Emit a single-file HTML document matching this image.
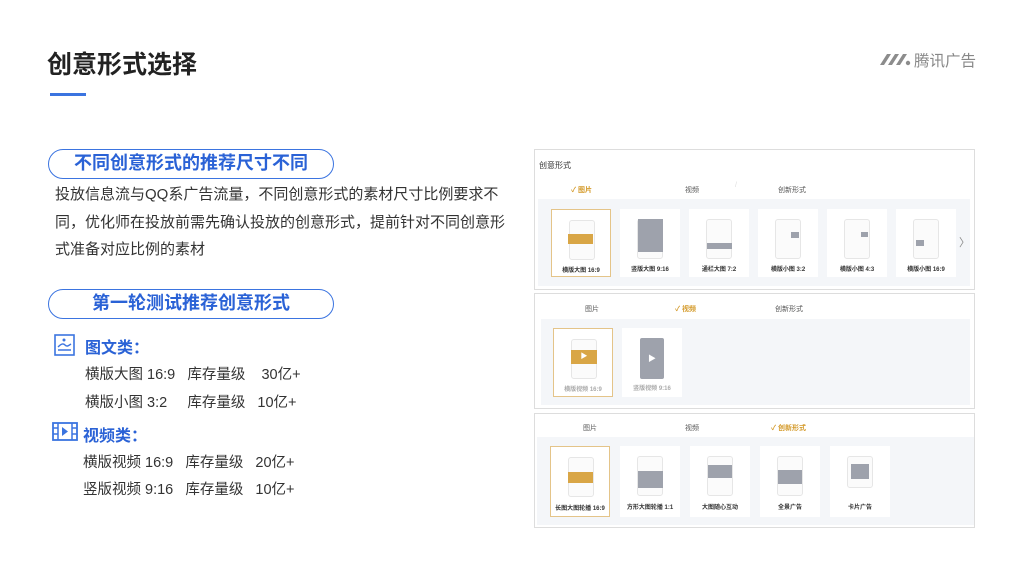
<!DOCTYPE html>
<html><head><meta charset="utf-8"><style>
*{margin:0;padding:0;box-sizing:border-box}
body{width:1024px;height:576px;background:#fff;position:relative;overflow:hidden;font-family:"Liberation Sans","Noto Sans CJK SC",sans-serif;color:#333}
.a{position:absolute;white-space:nowrap}
.pill{position:absolute;left:48px;width:286px;height:30px;border:1.5px solid #3b74e0;border-radius:15px;color:#2a62d6;font-weight:bold;font-size:18px;text-align:center;line-height:27px}
.p{font-size:15px;letter-spacing:0px;line-height:27.5px;color:#333}
.item{font-size:14.5px;color:#333}
.h{font-size:16px;font-weight:bold;color:#2a62d6}
.panel{position:absolute;left:534px;width:441px;border:1.5px solid #ddd;background:#fff}
.gray{position:absolute;background:#f4f6f9}
.card{position:absolute;background:#fff;width:60px;font-size:6px;text-align:center;color:#333;font-weight:bold}
.card.sel{border:1.5px solid #e4c489}
.ph{position:absolute;left:17px;width:26px;height:40px;border:1px solid #e6e6e6;border-radius:3px;background:#fbfbfb}
.tab{position:absolute;font-size:7px;color:#555}
.tab.on{color:#d49a2a;font-weight:bold}
.lbl{position:absolute;left:0;right:0}
</style></head><body>
<div class="a" style="left:47px;top:45px;font-size:25px;font-weight:bold;color:#222">创意形式选择</div>
<div class="a" style="left:50px;top:93px;width:36px;height:3px;background:#3b74e0"></div>
<svg class="a" style="left:878px;top:51px" width="34" height="16" viewBox="0 0 34 16"><g fill="#8c8c8c"><path d="M2 14l7-11h4l-7 11z"/><path d="M10 14l7-11h4l-7 11z"/><path d="M18 14l7-11h4l-7 11z"/><circle cx="30" cy="12" r="2.2"/></g></svg>
<div class="a" style="left:914px;top:49px;font-size:15.5px;color:#888">腾讯广告</div>

<div class="pill" style="top:149px">不同创意形式的推荐尺寸不同</div>
<div class="a p" style="left:55px;top:181px">投放信息流与QQ系广告流量，不同创意形式的素材尺寸比例要求不<br>同，优化师在投放前需先确认投放的创意形式，提前针对不同创意形<br>式准备对应比例的素材</div>
<div class="pill" style="top:289px">第一轮测试推荐创意形式</div>

<svg class="a" style="left:54px;top:334px" width="21" height="22" viewBox="0 0 21 22"><rect x="1" y="1" width="19" height="20" fill="none" stroke="#3b74e0" stroke-width="1.6"/><path d="M4 16h13M4 13c3-3 5-4 7-2s3 1 6-1" fill="none" stroke="#3b74e0" stroke-width="1.4"/><circle cx="10" cy="6" r="1.5" fill="#3b74e0"/></svg>
<div class="a h" style="left:85px;top:334px">图文类：</div>
<div class="a item" style="left:85px;top:363px">横版大图 16:9&nbsp;&nbsp; 库存量级&nbsp;&nbsp;&nbsp; 30亿+</div>
<div class="a item" style="left:85px;top:391px">横版小图 3:2&nbsp;&nbsp;&nbsp;&nbsp; 库存量级&nbsp;&nbsp;&nbsp;10亿+</div>
<svg class="a" style="left:52px;top:422px" width="26" height="19" viewBox="0 0 26 19"><rect x="1" y="1" width="24" height="17" fill="none" stroke="#3b74e0" stroke-width="1.8"/><path d="M6 1v17M20 1v17M1 6h5M1 12h5M20 6h5M20 12h5" stroke="#3b74e0" stroke-width="1.5"/><path d="M10 5l6 4.5-6 4.5z" fill="#3b74e0"/></svg>
<div class="a h" style="left:83px;top:422px">视频类：</div>
<div class="a item" style="left:83px;top:451px">横版视频 16:9&nbsp;&nbsp; 库存量级&nbsp;&nbsp;&nbsp;20亿+</div>
<div class="a item" style="left:83px;top:478px">竖版视频 9:16&nbsp;&nbsp; 库存量级&nbsp;&nbsp;&nbsp;10亿+</div>

<!-- panel 1 -->
<div class="panel" style="top:149px;height:141px">
 <div class="a" style="left:4px;top:10px;font-size:8px;color:#333">创意形式</div>
 <div class="tab on" style="left:36px;top:35px">✓ 图片</div>
 <div class="tab" style="left:150px;top:35px">视频</div>
 <div class="tab" style="left:200px;top:32px;color:#ddd">/</div>
 <div class="tab" style="left:243px;top:35px">创新形式</div>
 <div class="gray" style="left:3px;top:49px;width:432px;height:87px"></div>
</div>
<div class="card sel" style="left:551px;top:209px;height:68px"><div class="ph" style="top:10px"></div><div class="a" style="left:16px;top:24px;width:25px;height:10px;background:#d9a646"></div><div class="lbl" style="top:55px">横版大图 16:9</div></div>
<div class="card" style="left:620px;top:209px;height:68px"><div class="ph" style="top:10px"></div><div class="a" style="left:18px;top:10px;width:25px;height:33px;background:#9ea2ac"></div><div class="lbl" style="top:55px">竖版大图 9:16</div></div>
<div class="card" style="left:689px;top:209px;height:68px"><div class="ph" style="top:10px"></div><div class="a" style="left:18px;top:34px;width:25px;height:6px;background:#9ea2ac"></div><div class="lbl" style="top:55px">通栏大图 7:2</div></div>
<div class="card" style="left:758px;top:209px;height:68px"><div class="ph" style="top:10px"></div><div class="a" style="left:33px;top:23px;width:8px;height:6px;background:#9ea2ac"></div><div class="lbl" style="top:55px">横版小图 3:2</div></div>
<div class="card" style="left:827px;top:209px;height:68px"><div class="ph" style="top:10px"></div><div class="a" style="left:34px;top:23px;width:7px;height:5px;background:#9ea2ac"></div><div class="lbl" style="top:55px">横版小图 4:3</div></div>
<div class="card" style="left:896px;top:209px;height:68px"><div class="ph" style="top:10px"></div><div class="a" style="left:20px;top:31px;width:8px;height:6px;background:#9ea2ac"></div><div class="lbl" style="top:55px">横版小图 16:9</div></div>
<div class="a" style="left:959px;top:234px;font-size:11px;color:#888">〉</div>

<!-- panel 2 -->
<div class="panel" style="top:293px;height:116px">
 <div class="tab" style="left:50px;top:10px">图片</div>
 <div class="tab on" style="left:140px;top:10px">✓ 视频</div>
 <div class="tab" style="left:240px;top:10px">创新形式</div>
 <div class="gray" style="left:6px;top:25px;width:429px;height:86px"></div>
</div>
<div class="card sel" style="left:553px;top:328px;height:69px"><div class="ph" style="top:10px"></div><div class="a" style="left:17px;top:21px;width:26px;height:14px;background:#d9a646;color:#fff;font-size:7px;line-height:14px">▶</div><div class="lbl" style="top:55px;color:#aaa">横版视频 16:9</div></div>
<div class="card" style="left:622px;top:328px;height:69px"><div class="a" style="left:18px;top:10px;width:24px;height:41px;background:#9ea2ac;border-radius:2px;color:#fff;font-size:8px;line-height:41px">▶</div><div class="lbl" style="top:55px;color:#aaa">竖版视频 9:16</div></div>

<!-- panel 3 -->
<div class="panel" style="top:413px;height:115px">
 <div class="tab" style="left:48px;top:9px">图片</div>
 <div class="tab" style="left:150px;top:9px">视频</div>
 <div class="tab on" style="left:236px;top:9px">✓ 创新形式</div>
 <div class="gray" style="left:2px;top:23px;width:437px;height:88px"></div>
</div>
<div class="card sel" style="left:550px;top:446px;height:71px"><div class="ph" style="top:10px"></div><div class="a" style="left:17px;top:25px;width:25px;height:11px;background:#d9a646"></div><div class="lbl" style="top:56px">长图大图轮播 16:9</div></div>
<div class="card" style="left:620px;top:446px;height:71px"><div class="ph" style="top:10px"></div><div class="a" style="left:18px;top:25px;width:25px;height:17px;background:#9ea2ac"></div><div class="lbl" style="top:56px">方形大图轮播 1:1</div></div>
<div class="card" style="left:690px;top:446px;height:71px"><div class="ph" style="top:10px"></div><div class="a" style="left:18px;top:19px;width:24px;height:13px;background:#9ea2ac"></div><div class="lbl" style="top:56px">大图随心互动</div></div>
<div class="card" style="left:760px;top:446px;height:71px"><div class="ph" style="top:10px"></div><div class="a" style="left:18px;top:24px;width:24px;height:14px;background:#9ea2ac"></div><div class="lbl" style="top:56px">全景广告</div></div>
<div class="card" style="left:830px;top:446px;height:71px"><div class="ph" style="top:10px;height:32px"></div><div class="a" style="left:21px;top:18px;width:18px;height:15px;background:#9ea2ac"></div><div class="lbl" style="top:56px">卡片广告</div></div>
</body></html>
